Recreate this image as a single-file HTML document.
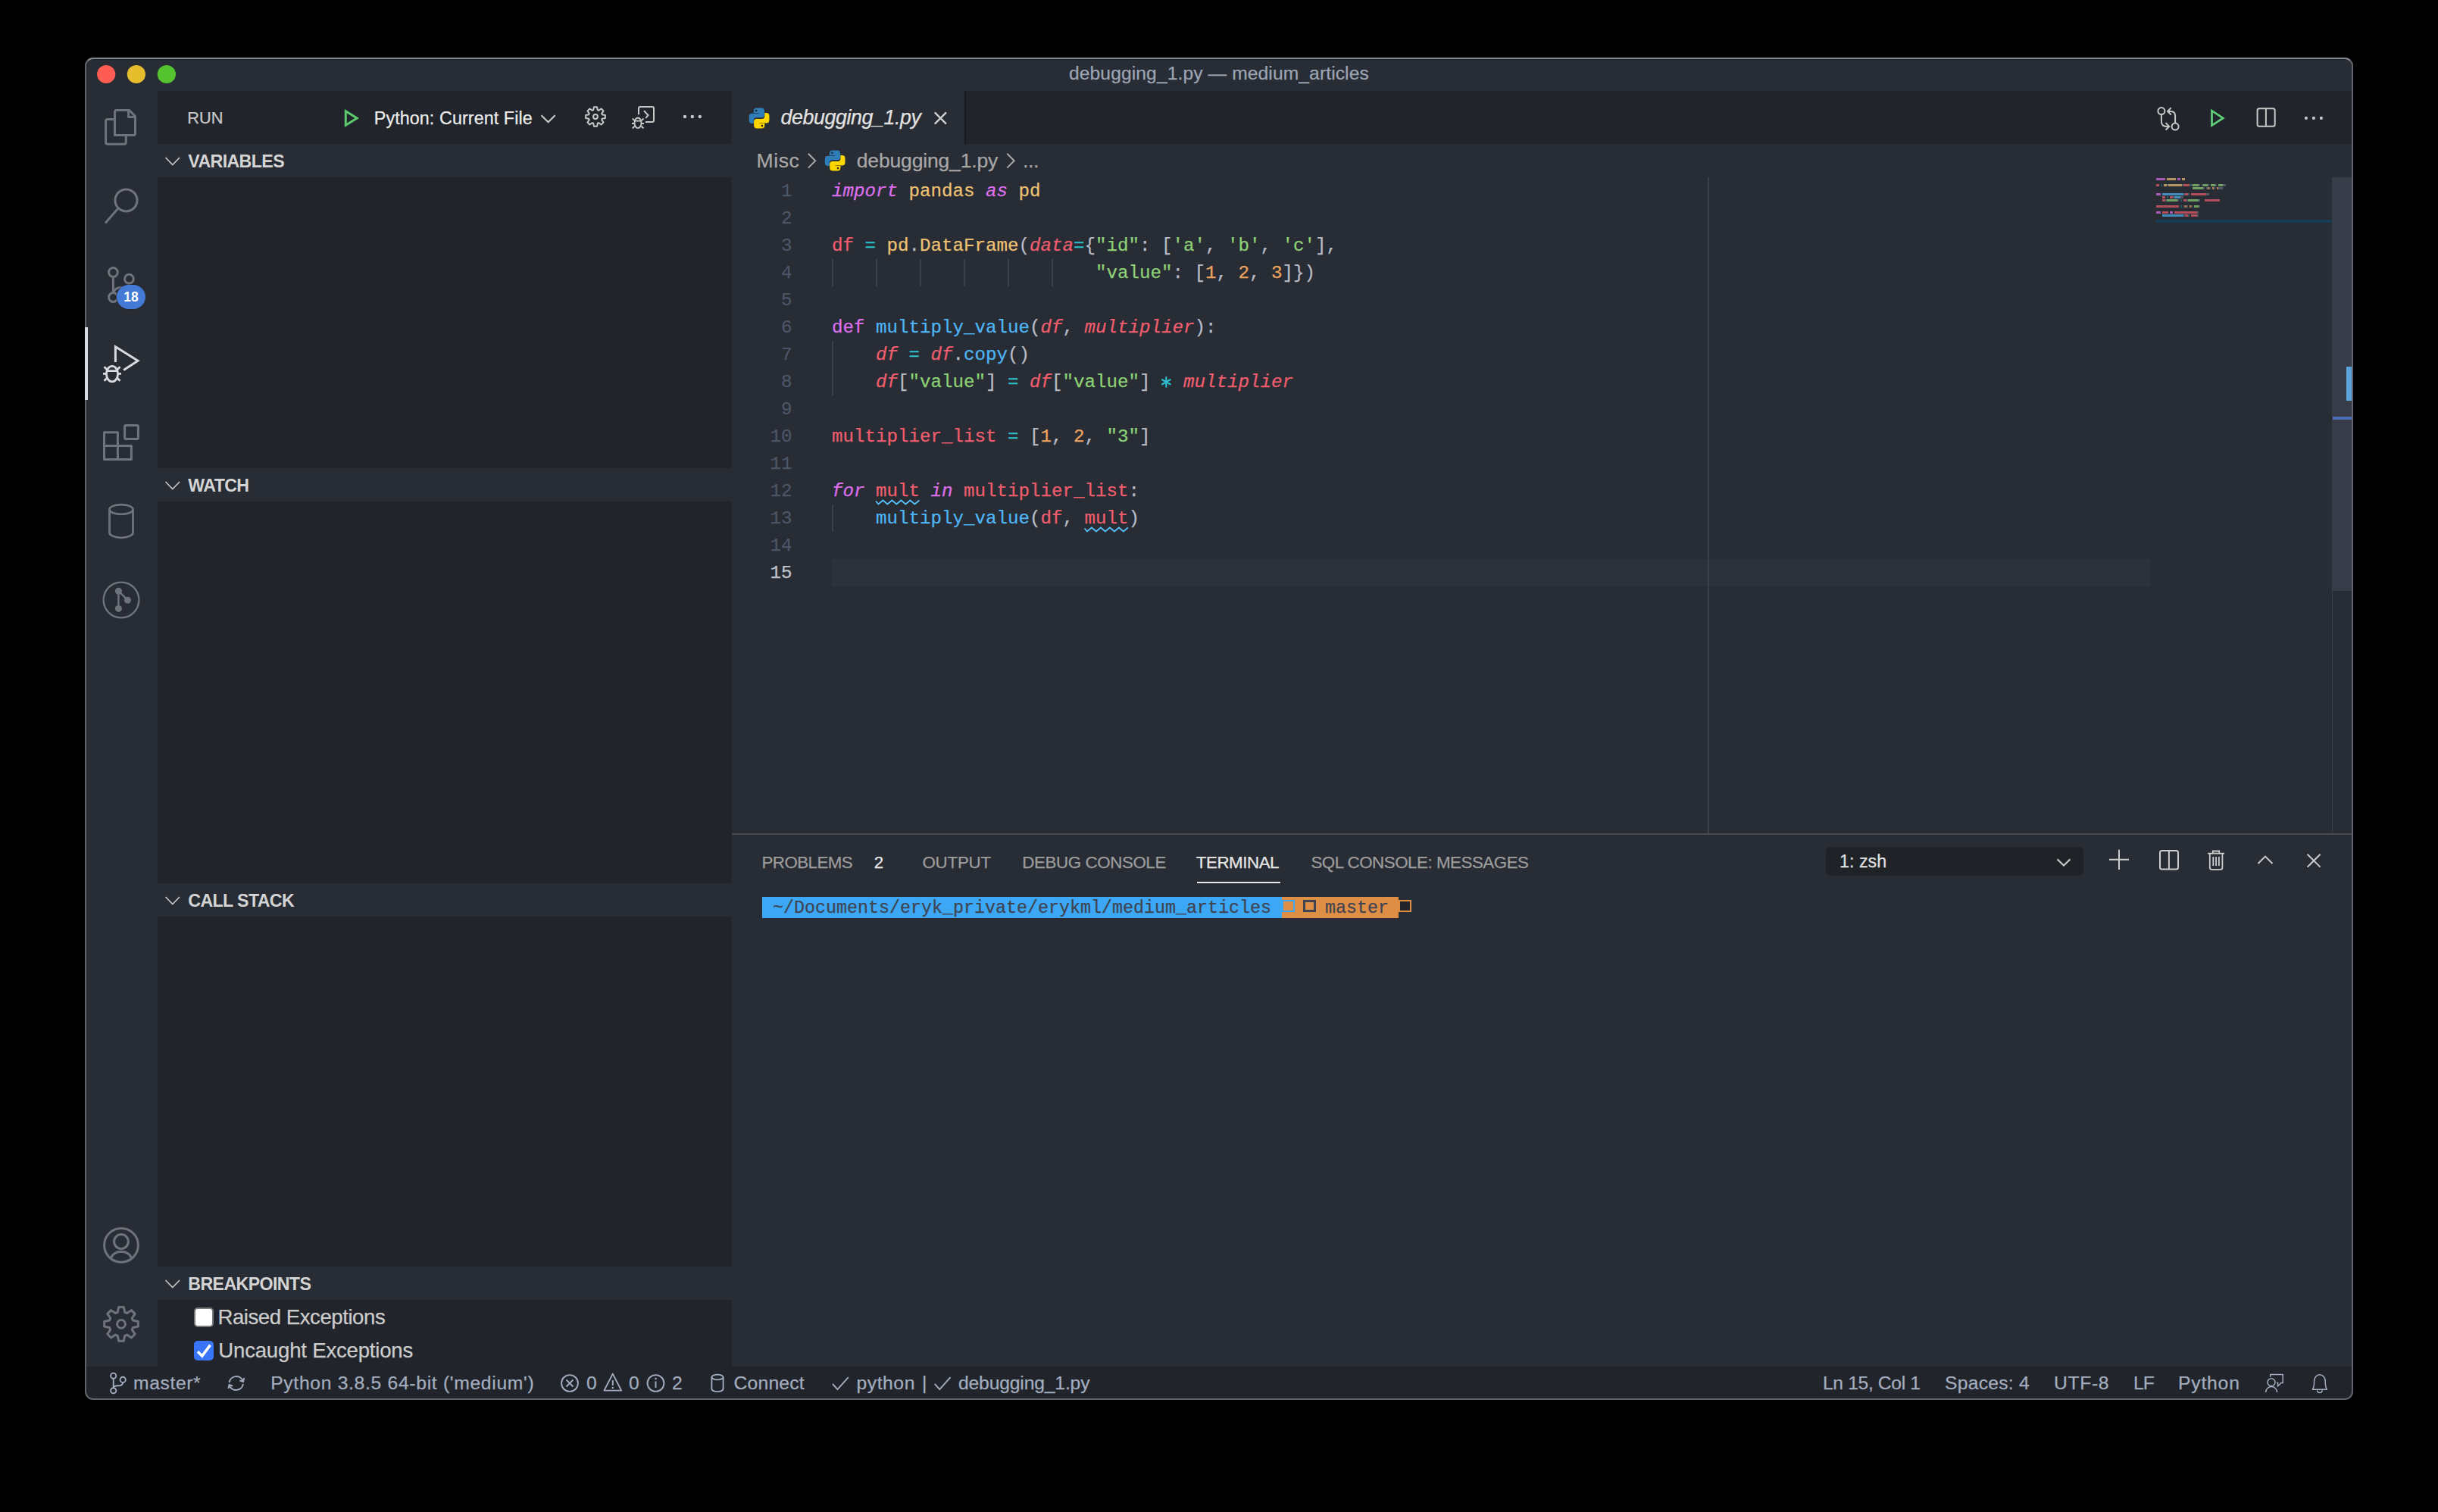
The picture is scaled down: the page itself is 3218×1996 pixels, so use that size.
<!DOCTYPE html>
<html><head><meta charset="utf-8">
<style>
*{margin:0;padding:0;box-sizing:border-box}
html,body{width:3218px;height:1996px;background:#000;overflow:hidden;font-family:"Liberation Sans",sans-serif}
.r{position:absolute}
.t{position:absolute;white-space:pre;line-height:1}
#win{position:absolute;left:112px;top:76px;width:2994px;height:1772px;border-radius:11px;overflow:hidden;background:#282c34}
#pg{position:absolute;left:-112px;top:-76px;width:3218px;height:1996px}
#ov{position:absolute;left:0;top:0;width:3218px;height:1996px;overflow:visible}
#bd{position:absolute;left:112px;top:76px;width:2994px;height:1772px;border-radius:11px;border:2px solid #606369;border-top-color:#86898e}
.t{-webkit-text-stroke:0.25px currentColor}
</style></head><body>
<div id="win"><div id="pg">
<div class="r" style="left:208px;top:120px;width:758px;height:1684px;background:#21252b;"></div>
<div class="r" style="left:208px;top:190px;width:758px;height:44px;background:#282c34;"></div>
<div class="r" style="left:208px;top:618px;width:758px;height:44px;background:#282c34;"></div>
<div class="r" style="left:208px;top:1166px;width:758px;height:44px;background:#282c34;"></div>
<div class="r" style="left:208px;top:1672px;width:758px;height:44px;background:#282c34;"></div>
<div class="r" style="left:966px;top:120px;width:2140px;height:70px;background:#21252b;"></div>
<div class="r" style="left:966px;top:120px;width:308px;height:70px;background:#282c34;"></div>
<div class="r" style="left:1273px;top:120px;width:2px;height:70px;background:#181a1f;"></div>
<div class="r" style="left:112px;top:1804px;width:2994px;height:44px;background:#21252b;"></div>
<div class="r" style="left:112px;top:78px;width:2994px;height:1px;background:#1e2128;"></div>
<div class="t" style="left:1411.00px;top:84.97px;font-size:24.6px;color:#9da5b4;letter-spacing:0.11px;">debugging_1.py — medium_articles</div>
<div class="t" style="left:247.30px;top:145.24px;font-size:21.8px;color:#c8c8c8;">RUN</div>
<div class="t" style="left:493.80px;top:145.27px;font-size:23.3px;color:#ececec;letter-spacing:0.09px;">Python: Current File</div>
<div class="t" style="left:248.30px;top:201.76px;font-size:23.2px;color:#d4d4d4;font-weight:bold;-webkit-text-stroke:0;letter-spacing:-0.62px;">VARIABLES</div>
<div class="t" style="left:248.30px;top:629.76px;font-size:23.2px;color:#d4d4d4;font-weight:bold;-webkit-text-stroke:0;letter-spacing:-0.62px;">WATCH</div>
<div class="t" style="left:248.30px;top:1177.76px;font-size:23.2px;color:#d4d4d4;font-weight:bold;-webkit-text-stroke:0;letter-spacing:-0.62px;">CALL STACK</div>
<div class="t" style="left:248.30px;top:1683.76px;font-size:23.2px;color:#d4d4d4;font-weight:bold;-webkit-text-stroke:0;letter-spacing:-0.62px;">BREAKPOINTS</div>
<div class="r" style="left:256px;top:1726px;width:26px;height:26px;border-radius:5px;background:#fff;border:2px solid #7a7a7a"></div>
<div class="r" style="left:256px;top:1770px;width:26px;height:26px;border-radius:5px;background:#3a74f6"></div>
<div class="t" style="left:287.50px;top:1724.63px;font-size:27.6px;color:#cccccc;letter-spacing:-0.46px;">Raised Exceptions</div>
<div class="t" style="left:288.30px;top:1768.63px;font-size:27.6px;color:#cccccc;letter-spacing:-0.21px;">Uncaught Exceptions</div>
<div class="t" style="left:1030.60px;top:141.61px;font-size:26.8px;color:#e2e2e2;font-style:italic;letter-spacing:-0.41px;">debugging_1.py</div>
<div class="t" style="left:998.50px;top:199.46px;font-size:26.5px;color:#a8a8a8;letter-spacing:0.6px;">Misc</div>
<div class="t" style="left:1130.80px;top:199.46px;font-size:26.5px;color:#a8a8a8;letter-spacing:-0.17px;">debugging_1.py</div>
<div class="t" style="left:1350.20px;top:200.31px;font-size:25.5px;color:#a8a8a8;">...</div>
<div class="r" style="left:1098px;top:738px;width:1740px;height:36px;background:#2c313c;"></div>
<div class="r" style="left:2254px;top:234px;width:2px;height:866px;background:#3b404a;"></div>
<div class="t" style="left:1031.10px;top:241.49px;font-size:24.16px;color:#4d5667;font-family:'Liberation Mono',monospace;">1</div>
<div class="t" style="left:1098.00px;top:241.49px;font-size:24.16px;color:#b8bcc7;font-family:'Liberation Mono',monospace;"><span style="color:#dd6fed;font-style:italic">import</span> <span style="color:#eec274">pandas</span> <span style="color:#dd6fed;font-style:italic">as</span> <span style="color:#eec274">pd</span></div>
<div class="t" style="left:1031.10px;top:277.49px;font-size:24.16px;color:#4d5667;font-family:'Liberation Mono',monospace;">2</div>
<div class="t" style="left:1031.10px;top:313.49px;font-size:24.16px;color:#4d5667;font-family:'Liberation Mono',monospace;">3</div>
<div class="t" style="left:1098.00px;top:313.49px;font-size:24.16px;color:#b8bcc7;font-family:'Liberation Mono',monospace;"><span style="color:#ef5e6e">df</span> <span style="color:#2cbccb">=</span> <span style="color:#eec274">pd</span><span style="color:#b8bcc7">.</span><span style="color:#eec274">DataFrame</span><span style="color:#b8bcc7">(</span><span style="color:#ef5e6e;font-style:italic">data</span><span style="color:#2cbccb">=</span><span style="color:#b8bcc7">{</span><span style="color:#8dd276">"id"</span><span style="color:#b8bcc7">: [</span><span style="color:#8dd276">'a'</span><span style="color:#b8bcc7">, </span><span style="color:#8dd276">'b'</span><span style="color:#b8bcc7">, </span><span style="color:#8dd276">'c'</span><span style="color:#b8bcc7">],</span></div>
<div class="t" style="left:1031.10px;top:349.49px;font-size:24.16px;color:#4d5667;font-family:'Liberation Mono',monospace;">4</div>
<div class="t" style="left:1098.00px;top:349.49px;font-size:24.16px;color:#b8bcc7;font-family:'Liberation Mono',monospace;">                        <span style="color:#8dd276">"value"</span><span style="color:#b8bcc7">: [</span><span style="color:#eda35d">1</span><span style="color:#b8bcc7">, </span><span style="color:#eda35d">2</span><span style="color:#b8bcc7">, </span><span style="color:#eda35d">3</span><span style="color:#b8bcc7">]})</span></div>
<div class="t" style="left:1031.10px;top:385.49px;font-size:24.16px;color:#4d5667;font-family:'Liberation Mono',monospace;">5</div>
<div class="t" style="left:1031.10px;top:421.49px;font-size:24.16px;color:#4d5667;font-family:'Liberation Mono',monospace;">6</div>
<div class="t" style="left:1098.00px;top:421.49px;font-size:24.16px;color:#b8bcc7;font-family:'Liberation Mono',monospace;"><span style="color:#dd6fed">def</span> <span style="color:#4fb6f6">multiply_value</span><span style="color:#b8bcc7">(</span><span style="color:#ef5e6e;font-style:italic">df</span><span style="color:#b8bcc7">, </span><span style="color:#ef5e6e;font-style:italic">multiplier</span><span style="color:#b8bcc7">):</span></div>
<div class="t" style="left:1031.10px;top:457.49px;font-size:24.16px;color:#4d5667;font-family:'Liberation Mono',monospace;">7</div>
<div class="t" style="left:1098.00px;top:457.49px;font-size:24.16px;color:#b8bcc7;font-family:'Liberation Mono',monospace;">    <span style="color:#ef5e6e;font-style:italic">df</span> <span style="color:#2cbccb">=</span> <span style="color:#ef5e6e;font-style:italic">df</span><span style="color:#b8bcc7">.</span><span style="color:#4fb6f6">copy</span><span style="color:#b8bcc7">()</span></div>
<div class="t" style="left:1031.10px;top:493.49px;font-size:24.16px;color:#4d5667;font-family:'Liberation Mono',monospace;">8</div>
<div class="t" style="left:1098.00px;top:493.49px;font-size:24.16px;color:#b8bcc7;font-family:'Liberation Mono',monospace;">    <span style="color:#ef5e6e;font-style:italic">df</span><span style="color:#b8bcc7">[</span><span style="color:#8dd276">"value"</span><span style="color:#b8bcc7">]</span> <span style="color:#2cbccb">=</span> <span style="color:#ef5e6e;font-style:italic">df</span><span style="color:#b8bcc7">[</span><span style="color:#8dd276">"value"</span><span style="color:#b8bcc7">]</span>   <span style="color:#ef5e6e;font-style:italic">multiplier</span></div>
<div class="t" style="left:1031.10px;top:529.49px;font-size:24.16px;color:#4d5667;font-family:'Liberation Mono',monospace;">9</div>
<div class="t" style="left:1016.60px;top:565.49px;font-size:24.16px;color:#4d5667;font-family:'Liberation Mono',monospace;">10</div>
<div class="t" style="left:1098.00px;top:565.49px;font-size:24.16px;color:#b8bcc7;font-family:'Liberation Mono',monospace;"><span style="color:#ef5e6e">multiplier_list</span> <span style="color:#2cbccb">=</span> <span style="color:#b8bcc7">[</span><span style="color:#eda35d">1</span><span style="color:#b8bcc7">, </span><span style="color:#eda35d">2</span><span style="color:#b8bcc7">, </span><span style="color:#8dd276">"3"</span><span style="color:#b8bcc7">]</span></div>
<div class="t" style="left:1016.60px;top:601.49px;font-size:24.16px;color:#4d5667;font-family:'Liberation Mono',monospace;">11</div>
<div class="t" style="left:1016.60px;top:637.49px;font-size:24.16px;color:#4d5667;font-family:'Liberation Mono',monospace;">12</div>
<div class="t" style="left:1098.00px;top:637.49px;font-size:24.16px;color:#b8bcc7;font-family:'Liberation Mono',monospace;"><span style="color:#dd6fed;font-style:italic">for</span> <span style="color:#ef5e6e">mult</span> <span style="color:#dd6fed;font-style:italic">in</span> <span style="color:#ef5e6e">multiplier_list</span><span style="color:#b8bcc7">:</span></div>
<div class="t" style="left:1016.60px;top:673.49px;font-size:24.16px;color:#4d5667;font-family:'Liberation Mono',monospace;">13</div>
<div class="t" style="left:1098.00px;top:673.49px;font-size:24.16px;color:#b8bcc7;font-family:'Liberation Mono',monospace;">    <span style="color:#4fb6f6">multiply_value</span><span style="color:#b8bcc7">(</span><span style="color:#ef5e6e">df</span><span style="color:#b8bcc7">, </span><span style="color:#ef5e6e">mult</span><span style="color:#b8bcc7">)</span></div>
<div class="t" style="left:1016.60px;top:709.49px;font-size:24.16px;color:#4d5667;font-family:'Liberation Mono',monospace;">14</div>
<div class="t" style="left:1016.60px;top:745.49px;font-size:24.16px;color:#c0c4cc;font-family:'Liberation Mono',monospace;">15</div>
<div class="r" style="left:1098.0px;top:342px;width:2px;height:36px;background:#3b4048;"></div>
<div class="r" style="left:1156.0px;top:342px;width:2px;height:36px;background:#3b4048;"></div>
<div class="r" style="left:1214.0px;top:342px;width:2px;height:36px;background:#3b4048;"></div>
<div class="r" style="left:1272.0px;top:342px;width:2px;height:36px;background:#3b4048;"></div>
<div class="r" style="left:1330.0px;top:342px;width:2px;height:36px;background:#3b4048;"></div>
<div class="r" style="left:1388.0px;top:342px;width:2px;height:36px;background:#3b4048;"></div>
<div class="r" style="left:1098px;top:450px;width:2px;height:72px;background:#3b4048;"></div>
<div class="r" style="left:1098px;top:666px;width:2px;height:36px;background:#3b4048;"></div>
<div class="r" style="left:2846px;top:234.5px;width:12px;height:3px;background:repeating-linear-gradient(90deg,#dd6fed 0 1.6px,transparent 1.6px 2px);opacity:0.7"></div>
<div class="r" style="left:2860px;top:234.5px;width:12px;height:3px;background:repeating-linear-gradient(90deg,#eec274 0 1.6px,transparent 1.6px 2px);opacity:0.7"></div>
<div class="r" style="left:2874px;top:234.5px;width:4px;height:3px;background:repeating-linear-gradient(90deg,#dd6fed 0 1.6px,transparent 1.6px 2px);opacity:0.7"></div>
<div class="r" style="left:2880px;top:234.5px;width:4px;height:3px;background:repeating-linear-gradient(90deg,#eec274 0 1.6px,transparent 1.6px 2px);opacity:0.7"></div>
<div class="r" style="left:2846px;top:242.5px;width:4px;height:3px;background:repeating-linear-gradient(90deg,#ef5e6e 0 1.6px,transparent 1.6px 2px);opacity:0.7"></div>
<div class="r" style="left:2852px;top:242.5px;width:2px;height:3px;background:repeating-linear-gradient(90deg,#2cbccb 0 1.6px,transparent 1.6px 2px);opacity:0.3"></div>
<div class="r" style="left:2856px;top:242.5px;width:4px;height:3px;background:repeating-linear-gradient(90deg,#eec274 0 1.6px,transparent 1.6px 2px);opacity:0.7"></div>
<div class="r" style="left:2860px;top:242.5px;width:2px;height:3px;background:repeating-linear-gradient(90deg,#b8bcc7 0 1.6px,transparent 1.6px 2px);opacity:0.3"></div>
<div class="r" style="left:2862px;top:242.5px;width:18px;height:3px;background:repeating-linear-gradient(90deg,#eec274 0 1.6px,transparent 1.6px 2px);opacity:0.7"></div>
<div class="r" style="left:2880px;top:242.5px;width:2px;height:3px;background:repeating-linear-gradient(90deg,#b8bcc7 0 1.6px,transparent 1.6px 2px);opacity:0.3"></div>
<div class="r" style="left:2882px;top:242.5px;width:8px;height:3px;background:repeating-linear-gradient(90deg,#ef5e6e 0 1.6px,transparent 1.6px 2px);opacity:0.7"></div>
<div class="r" style="left:2890px;top:242.5px;width:2px;height:3px;background:repeating-linear-gradient(90deg,#2cbccb 0 1.6px,transparent 1.6px 2px);opacity:0.3"></div>
<div class="r" style="left:2892px;top:242.5px;width:2px;height:3px;background:repeating-linear-gradient(90deg,#b8bcc7 0 1.6px,transparent 1.6px 2px);opacity:0.3"></div>
<div class="r" style="left:2894px;top:242.5px;width:8px;height:3px;background:repeating-linear-gradient(90deg,#8dd276 0 1.6px,transparent 1.6px 2px);opacity:0.7"></div>
<div class="r" style="left:2902px;top:242.5px;width:2px;height:3px;background:repeating-linear-gradient(90deg,#b8bcc7 0 1.6px,transparent 1.6px 2px);opacity:0.3"></div>
<div class="r" style="left:2906px;top:242.5px;width:2px;height:3px;background:repeating-linear-gradient(90deg,#b8bcc7 0 1.6px,transparent 1.6px 2px);opacity:0.3"></div>
<div class="r" style="left:2908px;top:242.5px;width:6px;height:3px;background:repeating-linear-gradient(90deg,#8dd276 0 1.6px,transparent 1.6px 2px);opacity:0.7"></div>
<div class="r" style="left:2914px;top:242.5px;width:2px;height:3px;background:repeating-linear-gradient(90deg,#b8bcc7 0 1.6px,transparent 1.6px 2px);opacity:0.3"></div>
<div class="r" style="left:2918px;top:242.5px;width:6px;height:3px;background:repeating-linear-gradient(90deg,#8dd276 0 1.6px,transparent 1.6px 2px);opacity:0.7"></div>
<div class="r" style="left:2924px;top:242.5px;width:2px;height:3px;background:repeating-linear-gradient(90deg,#b8bcc7 0 1.6px,transparent 1.6px 2px);opacity:0.3"></div>
<div class="r" style="left:2928px;top:242.5px;width:6px;height:3px;background:repeating-linear-gradient(90deg,#8dd276 0 1.6px,transparent 1.6px 2px);opacity:0.7"></div>
<div class="r" style="left:2934px;top:242.5px;width:2px;height:3px;background:repeating-linear-gradient(90deg,#b8bcc7 0 1.6px,transparent 1.6px 2px);opacity:0.3"></div>
<div class="r" style="left:2936px;top:242.5px;width:2px;height:3px;background:repeating-linear-gradient(90deg,#b8bcc7 0 1.6px,transparent 1.6px 2px);opacity:0.3"></div>
<div class="r" style="left:2894px;top:246.5px;width:14px;height:3px;background:repeating-linear-gradient(90deg,#8dd276 0 1.6px,transparent 1.6px 2px);opacity:0.7"></div>
<div class="r" style="left:2908px;top:246.5px;width:2px;height:3px;background:repeating-linear-gradient(90deg,#b8bcc7 0 1.6px,transparent 1.6px 2px);opacity:0.3"></div>
<div class="r" style="left:2912px;top:246.5px;width:2px;height:3px;background:repeating-linear-gradient(90deg,#b8bcc7 0 1.6px,transparent 1.6px 2px);opacity:0.3"></div>
<div class="r" style="left:2914px;top:246.5px;width:2px;height:3px;background:repeating-linear-gradient(90deg,#eda35d 0 1.6px,transparent 1.6px 2px);opacity:0.7"></div>
<div class="r" style="left:2916px;top:246.5px;width:2px;height:3px;background:repeating-linear-gradient(90deg,#b8bcc7 0 1.6px,transparent 1.6px 2px);opacity:0.3"></div>
<div class="r" style="left:2920px;top:246.5px;width:2px;height:3px;background:repeating-linear-gradient(90deg,#eda35d 0 1.6px,transparent 1.6px 2px);opacity:0.7"></div>
<div class="r" style="left:2922px;top:246.5px;width:2px;height:3px;background:repeating-linear-gradient(90deg,#b8bcc7 0 1.6px,transparent 1.6px 2px);opacity:0.3"></div>
<div class="r" style="left:2926px;top:246.5px;width:2px;height:3px;background:repeating-linear-gradient(90deg,#eda35d 0 1.6px,transparent 1.6px 2px);opacity:0.7"></div>
<div class="r" style="left:2928px;top:246.5px;width:2px;height:3px;background:repeating-linear-gradient(90deg,#b8bcc7 0 1.6px,transparent 1.6px 2px);opacity:0.3"></div>
<div class="r" style="left:2930px;top:246.5px;width:2px;height:3px;background:repeating-linear-gradient(90deg,#b8bcc7 0 1.6px,transparent 1.6px 2px);opacity:0.3"></div>
<div class="r" style="left:2932px;top:246.5px;width:2px;height:3px;background:repeating-linear-gradient(90deg,#b8bcc7 0 1.6px,transparent 1.6px 2px);opacity:0.3"></div>
<div class="r" style="left:2846px;top:254.5px;width:6px;height:3px;background:repeating-linear-gradient(90deg,#dd6fed 0 1.6px,transparent 1.6px 2px);opacity:0.7"></div>
<div class="r" style="left:2854px;top:254.5px;width:28px;height:3px;background:repeating-linear-gradient(90deg,#4fb6f6 0 1.6px,transparent 1.6px 2px);opacity:0.7"></div>
<div class="r" style="left:2882px;top:254.5px;width:2px;height:3px;background:repeating-linear-gradient(90deg,#b8bcc7 0 1.6px,transparent 1.6px 2px);opacity:0.3"></div>
<div class="r" style="left:2884px;top:254.5px;width:4px;height:3px;background:repeating-linear-gradient(90deg,#ef5e6e 0 1.6px,transparent 1.6px 2px);opacity:0.7"></div>
<div class="r" style="left:2888px;top:254.5px;width:2px;height:3px;background:repeating-linear-gradient(90deg,#b8bcc7 0 1.6px,transparent 1.6px 2px);opacity:0.3"></div>
<div class="r" style="left:2892px;top:254.5px;width:20px;height:3px;background:repeating-linear-gradient(90deg,#ef5e6e 0 1.6px,transparent 1.6px 2px);opacity:0.7"></div>
<div class="r" style="left:2912px;top:254.5px;width:2px;height:3px;background:repeating-linear-gradient(90deg,#b8bcc7 0 1.6px,transparent 1.6px 2px);opacity:0.3"></div>
<div class="r" style="left:2914px;top:254.5px;width:2px;height:3px;background:repeating-linear-gradient(90deg,#b8bcc7 0 1.6px,transparent 1.6px 2px);opacity:0.3"></div>
<div class="r" style="left:2854px;top:258.5px;width:4px;height:3px;background:repeating-linear-gradient(90deg,#ef5e6e 0 1.6px,transparent 1.6px 2px);opacity:0.7"></div>
<div class="r" style="left:2860px;top:258.5px;width:2px;height:3px;background:repeating-linear-gradient(90deg,#2cbccb 0 1.6px,transparent 1.6px 2px);opacity:0.3"></div>
<div class="r" style="left:2864px;top:258.5px;width:4px;height:3px;background:repeating-linear-gradient(90deg,#ef5e6e 0 1.6px,transparent 1.6px 2px);opacity:0.7"></div>
<div class="r" style="left:2868px;top:258.5px;width:2px;height:3px;background:repeating-linear-gradient(90deg,#b8bcc7 0 1.6px,transparent 1.6px 2px);opacity:0.3"></div>
<div class="r" style="left:2870px;top:258.5px;width:8px;height:3px;background:repeating-linear-gradient(90deg,#4fb6f6 0 1.6px,transparent 1.6px 2px);opacity:0.7"></div>
<div class="r" style="left:2878px;top:258.5px;width:2px;height:3px;background:repeating-linear-gradient(90deg,#b8bcc7 0 1.6px,transparent 1.6px 2px);opacity:0.3"></div>
<div class="r" style="left:2880px;top:258.5px;width:2px;height:3px;background:repeating-linear-gradient(90deg,#b8bcc7 0 1.6px,transparent 1.6px 2px);opacity:0.3"></div>
<div class="r" style="left:2854px;top:262.5px;width:4px;height:3px;background:repeating-linear-gradient(90deg,#ef5e6e 0 1.6px,transparent 1.6px 2px);opacity:0.7"></div>
<div class="r" style="left:2858px;top:262.5px;width:2px;height:3px;background:repeating-linear-gradient(90deg,#b8bcc7 0 1.6px,transparent 1.6px 2px);opacity:0.3"></div>
<div class="r" style="left:2860px;top:262.5px;width:14px;height:3px;background:repeating-linear-gradient(90deg,#8dd276 0 1.6px,transparent 1.6px 2px);opacity:0.7"></div>
<div class="r" style="left:2874px;top:262.5px;width:2px;height:3px;background:repeating-linear-gradient(90deg,#b8bcc7 0 1.6px,transparent 1.6px 2px);opacity:0.3"></div>
<div class="r" style="left:2878px;top:262.5px;width:2px;height:3px;background:repeating-linear-gradient(90deg,#2cbccb 0 1.6px,transparent 1.6px 2px);opacity:0.3"></div>
<div class="r" style="left:2882px;top:262.5px;width:4px;height:3px;background:repeating-linear-gradient(90deg,#ef5e6e 0 1.6px,transparent 1.6px 2px);opacity:0.7"></div>
<div class="r" style="left:2886px;top:262.5px;width:2px;height:3px;background:repeating-linear-gradient(90deg,#b8bcc7 0 1.6px,transparent 1.6px 2px);opacity:0.3"></div>
<div class="r" style="left:2888px;top:262.5px;width:14px;height:3px;background:repeating-linear-gradient(90deg,#8dd276 0 1.6px,transparent 1.6px 2px);opacity:0.7"></div>
<div class="r" style="left:2902px;top:262.5px;width:2px;height:3px;background:repeating-linear-gradient(90deg,#b8bcc7 0 1.6px,transparent 1.6px 2px);opacity:0.3"></div>
<div class="r" style="left:2910px;top:262.5px;width:20px;height:3px;background:repeating-linear-gradient(90deg,#ef5e6e 0 1.6px,transparent 1.6px 2px);opacity:0.7"></div>
<div class="r" style="left:2846px;top:270.5px;width:30px;height:3px;background:repeating-linear-gradient(90deg,#ef5e6e 0 1.6px,transparent 1.6px 2px);opacity:0.7"></div>
<div class="r" style="left:2878px;top:270.5px;width:2px;height:3px;background:repeating-linear-gradient(90deg,#2cbccb 0 1.6px,transparent 1.6px 2px);opacity:0.3"></div>
<div class="r" style="left:2882px;top:270.5px;width:2px;height:3px;background:repeating-linear-gradient(90deg,#b8bcc7 0 1.6px,transparent 1.6px 2px);opacity:0.3"></div>
<div class="r" style="left:2884px;top:270.5px;width:2px;height:3px;background:repeating-linear-gradient(90deg,#eda35d 0 1.6px,transparent 1.6px 2px);opacity:0.7"></div>
<div class="r" style="left:2886px;top:270.5px;width:2px;height:3px;background:repeating-linear-gradient(90deg,#b8bcc7 0 1.6px,transparent 1.6px 2px);opacity:0.3"></div>
<div class="r" style="left:2890px;top:270.5px;width:2px;height:3px;background:repeating-linear-gradient(90deg,#eda35d 0 1.6px,transparent 1.6px 2px);opacity:0.7"></div>
<div class="r" style="left:2892px;top:270.5px;width:2px;height:3px;background:repeating-linear-gradient(90deg,#b8bcc7 0 1.6px,transparent 1.6px 2px);opacity:0.3"></div>
<div class="r" style="left:2896px;top:270.5px;width:6px;height:3px;background:repeating-linear-gradient(90deg,#8dd276 0 1.6px,transparent 1.6px 2px);opacity:0.7"></div>
<div class="r" style="left:2902px;top:270.5px;width:2px;height:3px;background:repeating-linear-gradient(90deg,#b8bcc7 0 1.6px,transparent 1.6px 2px);opacity:0.3"></div>
<div class="r" style="left:2846px;top:278.5px;width:6px;height:3px;background:repeating-linear-gradient(90deg,#dd6fed 0 1.6px,transparent 1.6px 2px);opacity:0.7"></div>
<div class="r" style="left:2854px;top:278.5px;width:8px;height:3px;background:repeating-linear-gradient(90deg,#ef5e6e 0 1.6px,transparent 1.6px 2px);opacity:0.7"></div>
<div class="r" style="left:2864px;top:278.5px;width:4px;height:3px;background:repeating-linear-gradient(90deg,#dd6fed 0 1.6px,transparent 1.6px 2px);opacity:0.7"></div>
<div class="r" style="left:2870px;top:278.5px;width:30px;height:3px;background:repeating-linear-gradient(90deg,#ef5e6e 0 1.6px,transparent 1.6px 2px);opacity:0.7"></div>
<div class="r" style="left:2900px;top:278.5px;width:2px;height:3px;background:repeating-linear-gradient(90deg,#b8bcc7 0 1.6px,transparent 1.6px 2px);opacity:0.3"></div>
<div class="r" style="left:2854px;top:282.5px;width:28px;height:3px;background:repeating-linear-gradient(90deg,#4fb6f6 0 1.6px,transparent 1.6px 2px);opacity:0.7"></div>
<div class="r" style="left:2882px;top:282.5px;width:2px;height:3px;background:repeating-linear-gradient(90deg,#b8bcc7 0 1.6px,transparent 1.6px 2px);opacity:0.3"></div>
<div class="r" style="left:2884px;top:282.5px;width:4px;height:3px;background:repeating-linear-gradient(90deg,#ef5e6e 0 1.6px,transparent 1.6px 2px);opacity:0.7"></div>
<div class="r" style="left:2888px;top:282.5px;width:2px;height:3px;background:repeating-linear-gradient(90deg,#b8bcc7 0 1.6px,transparent 1.6px 2px);opacity:0.3"></div>
<div class="r" style="left:2892px;top:282.5px;width:8px;height:3px;background:repeating-linear-gradient(90deg,#ef5e6e 0 1.6px,transparent 1.6px 2px);opacity:0.7"></div>
<div class="r" style="left:2900px;top:282.5px;width:2px;height:3px;background:repeating-linear-gradient(90deg,#b8bcc7 0 1.6px,transparent 1.6px 2px);opacity:0.3"></div>
<div class="r" style="left:2846px;top:290px;width:232px;height:4px;background:#1a3b56;"></div>
<div class="r" style="left:3078px;top:234px;width:27px;height:546px;background:#373c48;"></div>
<div class="r" style="left:3078px;top:234px;width:1px;height:866px;background:#3a3f4a;"></div>
<div class="r" style="left:3097px;top:484px;width:8px;height:45px;background:#5aa3dc;"></div>
<div class="r" style="left:3079px;top:550px;width:26px;height:4px;background:#4c6eb3;"></div>
<div class="r" style="left:966px;top:1100px;width:2140px;height:2px;background:#484b51;"></div>
<div class="t" style="left:1005.50px;top:1127.62px;font-size:22.3px;color:#9d9d9d;letter-spacing:-0.54px;">PROBLEMS</div>
<div class="t" style="left:1217.40px;top:1127.62px;font-size:22.3px;color:#9d9d9d;letter-spacing:-0.18px;">OUTPUT</div>
<div class="t" style="left:1349.20px;top:1127.62px;font-size:22.3px;color:#9d9d9d;letter-spacing:-0.37px;">DEBUG CONSOLE</div>
<div class="t" style="left:1578.80px;top:1127.62px;font-size:22.3px;color:#e7e7e7;letter-spacing:-0.43px;">TERMINAL</div>
<div class="t" style="left:1730.40px;top:1127.62px;font-size:22.3px;color:#9d9d9d;letter-spacing:-0.45px;">SQL CONSOLE: MESSAGES</div>
<div class="t" style="left:1153.80px;top:1127.62px;font-size:22.3px;color:#e7e7e7;">2</div>
<div class="r" style="left:1580px;top:1164px;width:110px;height:2px;background:#e7e7e7;"></div>
<div class="r" style="left:2410px;top:1118px;width:340px;height:38px;border-radius:7px;background:#1f2227"></div>
<div class="t" style="left:2428.00px;top:1126.27px;font-size:23.3px;color:#e0e0e0;">1: zsh</div>
<div class="r" style="left:1006px;top:1184px;width:686px;height:28px;background:#3ba7f5;"></div>
<div class="r" style="left:1692px;top:1184px;width:154px;height:28px;background:#df8e45;"></div>
<div class="t" style="left:1006.00px;top:1188.13px;font-size:23.33px;color:#3f4451;font-family:'Liberation Mono',monospace;"> ~/Documents/eryk_private/erykml/medium_articles </div>
<div class="t" style="left:1748.90px;top:1188.13px;font-size:23.33px;color:#3f4451;font-family:'Liberation Mono',monospace;">master</div>
<div class="r" style="left:1692px;top:1188px;width:17px;height:16px;border:2.5px solid #3ba7f5"></div>
<div class="r" style="left:1720px;top:1188px;width:17px;height:16px;border:3px solid #3f4451"></div>
<div class="r" style="left:1846px;top:1188px;width:17px;height:16px;border:2.5px solid #df8e45;background:#21252b"></div>
<div class="t" style="left:176.00px;top:1813.79px;font-size:24.7px;color:#a3adbf;letter-spacing:0.6px;">master*</div>
<div class="t" style="left:357.20px;top:1813.79px;font-size:24.7px;color:#a3adbf;letter-spacing:0.68px;">Python 3.8.5 64-bit ('medium')</div>
<div class="t" style="left:774.00px;top:1813.79px;font-size:24.7px;color:#a3adbf;">0</div>
<div class="t" style="left:830.00px;top:1813.79px;font-size:24.7px;color:#a3adbf;">0</div>
<div class="t" style="left:887.00px;top:1813.79px;font-size:24.7px;color:#a3adbf;">2</div>
<div class="t" style="left:968.50px;top:1813.79px;font-size:24.7px;color:#a3adbf;letter-spacing:0.2px;">Connect</div>
<div class="t" style="left:1130.50px;top:1813.79px;font-size:24.7px;color:#a3adbf;letter-spacing:0.55px;">python</div>
<div class="t" style="left:1217.00px;top:1813.79px;font-size:24.7px;color:#a3adbf;">|</div>
<div class="t" style="left:1265.00px;top:1813.79px;font-size:24.7px;color:#a3adbf;letter-spacing:-0.17px;">debugging_1.py</div>
<div class="t" style="left:2406.00px;top:1813.79px;font-size:24.7px;color:#a3adbf;letter-spacing:-0.38px;">Ln 15, Col 1</div>
<div class="t" style="left:2567.00px;top:1813.79px;font-size:24.7px;color:#a3adbf;letter-spacing:0.25px;">Spaces: 4</div>
<div class="t" style="left:2711.00px;top:1813.79px;font-size:24.7px;color:#a3adbf;letter-spacing:0.65px;">UTF-8</div>
<div class="t" style="left:2816.00px;top:1813.79px;font-size:24.7px;color:#a3adbf;letter-spacing:-1px;">LF</div>
<div class="t" style="left:2875.00px;top:1813.79px;font-size:24.7px;color:#a3adbf;letter-spacing:0.8px;">Python</div>
</div></div>
<div id="bd"></div>
<svg id="ov" viewBox="0 0 3218 1996">
<circle cx="140.2" cy="98" r="12.1" fill="#fd5d52"/>
<circle cx="179.9" cy="98" r="12.1" fill="#e6bd2c"/>
<circle cx="219.9" cy="98" r="12.1" fill="#53c22e"/>
<path d="M218.5,208 L227.8,217.5 L237.1,208" fill="none" stroke="#c5c5c5" stroke-width="1.7"/>
<path d="M218.5,636 L227.8,645.5 L237.1,636" fill="none" stroke="#c5c5c5" stroke-width="1.7"/>
<path d="M218.5,1184 L227.8,1193.5 L237.1,1184" fill="none" stroke="#c5c5c5" stroke-width="1.7"/>
<path d="M218.5,1690 L227.8,1699.5 L237.1,1690" fill="none" stroke="#c5c5c5" stroke-width="1.7"/>
<path d="M261,1784.3 L266.8,1790 L277.5,1775.6" fill="none" stroke="#fff" stroke-width="3.6"/>
<path d="M1539.3,497.2 V511.4 M1533.2,500.8 L1545.4,507.8 M1533.2,507.8 L1545.4,500.8" stroke="#2cbccb" stroke-width="2.2" fill="none"/>
<path d="M1156.0,661.5 L1159.4,665.5 L1165.4,660.5 L1171.4,665.5 L1177.4,660.5 L1183.4,665.5 L1189.4,660.5 L1195.4,665.5 L1201.4,660.5 L1207.4,665.5 L1213.4,660.5" fill="none" stroke="#56bff8" stroke-width="1.9"/>
<path d="M1431.5,697.5 L1434.9,701.5 L1440.9,696.5 L1446.9,701.5 L1452.9,696.5 L1458.9,701.5 L1464.9,696.5 L1470.9,701.5 L1476.9,696.5 L1482.9,701.5 L1488.9,696.5" fill="none" stroke="#56bff8" stroke-width="1.9"/>
<g fill="none" stroke="#6e737c" stroke-width="3" stroke-linejoin="round"><path d="M151.5,178.4 V148 Q151.5,145.4 154,145.4 H170.5 L178.5,153.5 V176 Q178.5,178.4 176,178.4 Z"/><path d="M169.6,145.4 V154.4 H178.5"/><path d="M151.5,157.5 H142 Q139.6,157.5 139.6,160 V188 Q139.6,190.3 142,190.3 H164 Q166.3,190.3 166.3,188 V178.4"/></g>
<g fill="none" stroke="#6e737c" stroke-width="3" ><circle cx="166.5" cy="264.4" r="14.5"/><path d="M156.2,274.7 L139,294.6"/></g>
<g fill="none" stroke="#6e737c" stroke-width="3" ><circle cx="149.4" cy="359.4" r="5.9"/><circle cx="170.4" cy="368.2" r="5.9"/><circle cx="149.4" cy="392.5" r="5.9"/><path d="M149.4,365.3 V386.6"/><path d="M170.4,374 C170.4,380 163,378.8 158.7,379.4 S150.5,382 149.4,386.5"/></g>
<rect x="153" y="375" width="40" height="34" rx="17" fill="#21252b" opacity="0.6"/>
<rect x="154" y="376" width="38" height="32" rx="16" fill="#4479d6"/>
<text x="173" y="398.2" font-family="Liberation Sans" font-weight="bold" font-size="17.5" fill="#fff" text-anchor="middle">18</text>
<rect x="112" y="432" width="4" height="96" fill="#d7dae0"/>
<g fill="none" stroke="#d7dae0" stroke-width="3" stroke-linejoin="miter"><path d="M152.4,478 V457.8 L182,476.2 L163.2,488.6"/></g>
<g fill="none" stroke="#d7dae0" stroke-width="2.8" ><ellipse cx="148" cy="493.6" rx="7.6" ry="10.2"/><path d="M140.5,489.7 H155.5 M136,493.4 H140.5 M155.5,493.4 H160 M137.5,484.3 L141.3,488 M158.5,484.3 L154.7,488 M137.5,502.8 L141.3,499 M158.5,502.8 L154.7,499"/></g>
<g fill="none" stroke="#6e737c" stroke-width="3" stroke-linejoin="round"><path d="M137.5,570.7 H155.4 V606.4 H137.5 Z M137.5,588.5 H173.4 V606.4 H155.4"/><rect x="164.6" y="561.5" width="17.8" height="17.9" rx="1.5"/></g>
<g fill="none" stroke="#6e737c" stroke-width="2.8" ><ellipse cx="160" cy="672.5" rx="15.5" ry="6.4"/><path d="M144.5,672.5 V703 A15.5,6.8 0 0 0 175.5,703 V672.5"/></g>
<g fill="none" stroke="#6e737c" stroke-width="2.4" ><circle cx="160" cy="792" r="23.4"/><path d="M156.4,780.2 V803.4 M156.4,780.2 L168.4,792.2"/></g>
<g fill="#6e737c"><circle cx="156.4" cy="780.2" r="4.5"/><circle cx="168.4" cy="792.2" r="4.5"/><circle cx="156.4" cy="803.4" r="4.5"/></g>
<g fill="none" stroke="#6e737c" stroke-width="3" ><circle cx="160" cy="1643.8" r="22.4"/><circle cx="160" cy="1639" r="9.4"/><path d="M146.6,1660.3 A14.6,13.5 0 0 1 173.4,1660.3"/></g>
<g fill="none" stroke="#6e737c" stroke-width="3" stroke-linejoin="round"><path d="M155.26,1732.31 L156.66,1725.45 L163.34,1725.45 L164.74,1732.31 L167.61,1733.50 L173.44,1729.63 L178.17,1734.36 L174.30,1740.19 L175.49,1743.06 L182.35,1744.46 L182.35,1751.14 L175.49,1752.54 L174.30,1755.41 L178.17,1761.24 L173.44,1765.97 L167.61,1762.10 L164.74,1763.29 L163.34,1770.15 L156.66,1770.15 L155.26,1763.29 L152.39,1762.10 L146.56,1765.97 L141.83,1761.24 L145.70,1755.41 L144.51,1752.54 L137.65,1751.14 L137.65,1744.46 L144.51,1743.06 L145.70,1740.19 L141.83,1734.36 L146.56,1729.63 L152.39,1733.50 Z"/><circle cx="160" cy="1747.8" r="5.4"/></g>
<g fill="none" stroke="#5cc96f" stroke-width="3" stroke-linejoin="miter"><path d="M456.3,146.8 V165.2 L471.2,156 Z"/></g>
<g fill="none" stroke="#c8c8c8" stroke-width="2.2" ><path d="M714.5,152.3 L723.6,161.3 L732.7,152.3"/></g>
<g fill="none" stroke="#c8c8c8" stroke-width="2" stroke-linejoin="round"><path d="M783.16,145.25 L783.97,141.16 L788.03,141.16 L788.84,145.25 L790.18,145.80 L793.64,143.48 L796.52,146.36 L794.20,149.82 L794.75,151.16 L798.84,151.97 L798.84,156.03 L794.75,156.84 L794.20,158.18 L796.52,161.64 L793.64,164.52 L790.18,162.20 L788.84,162.75 L788.03,166.84 L783.97,166.84 L783.16,162.75 L781.82,162.20 L778.36,164.52 L775.48,161.64 L777.80,158.18 L777.25,156.84 L773.16,156.03 L773.16,151.97 L777.25,151.16 L777.80,149.82 L775.48,146.36 L778.36,143.48 L781.82,145.80 Z"/><circle cx="786" cy="154" r="2.9"/></g>
<g fill="none" stroke="#c8c8c8" stroke-width="2" ><path d="M843,151.3 V143 Q843,140.9 845,140.9 H861 Q863,140.9 863,143 V159 Q863,161 861,161 H852"/><path d="M850,146.3 L855.5,152 L852.3,155.8"/></g>
<g fill="none" stroke="#c8c8c8" stroke-width="1.9" ><ellipse cx="842" cy="162.3" rx="4.5" ry="6.8"/><path d="M837.5,159.6 H846.5 M834,163 H837.5 M846.5,163 H850 M834.8,156.5 L837.5,159 M849.5,156.5 L846.8,159 M834.8,169.5 L837.8,166.5 M849.5,169.5 L846.5,166.5"/></g>
<g fill="#c8c8c8"><circle cx="904" cy="154" r="2.2"/><circle cx="913.8" cy="154" r="2.2"/><circle cx="923.8" cy="154" r="2.2"/></g>
<defs><g id="py">
<path fill="#2e7cb8" d="M10,0 H16.3 Q20.3,0 20.3,4 V9 Q20.3,12.6 16.7,12.6 H9.7 Q6.1,12.6 6.1,16.2 V20.5 H4 Q0,20.5 0,16.5 V11 Q0,7.1 4,7.1 H13 V6.4 H6.1 V4 Q6.1,0 10,0 Z"/>
<circle cx="9.5" cy="3.4" r="1.3" fill="#21252b"/>
<g transform="rotate(180 13.35 13.45)">
<path fill="#fdd700" d="M10,0 H16.3 Q20.3,0 20.3,4 V9 Q20.3,12.6 16.7,12.6 H9.7 Q6.1,12.6 6.1,16.2 V20.5 H4 Q0,20.5 0,16.5 V11 Q0,7.1 4,7.1 H13 V6.4 H6.1 V4 Q6.1,0 10,0 Z"/>
<circle cx="9.5" cy="3.4" r="1.3" fill="#21252b"/>
</g></g></defs>
<use href="#py" x="988.7" y="142.6"/>
<use href="#py" x="1088.8" y="198.6"/>
<g fill="none" stroke="#d0d0d0" stroke-width="2.3" ><path d="M1233.8,148.4 L1249,163.6 M1249,148.4 L1233.8,163.6"/></g>
<g fill="none" stroke="#a8a8a8" stroke-width="2" ><path d="M1066.8,202.8 L1076.2,212.2 L1066.8,221.6 M1329.3,202.8 L1338.7,212.2 L1329.3,221.6"/></g>
<g fill="none" stroke="#c8c8c8" stroke-width="2" ><circle cx="2852.9" cy="146.6" r="4.5"/><circle cx="2871.1" cy="167.1" r="4.5"/><path d="M2852.9,151.1 V160 Q2852.9,166.9 2859.5,166.9 H2863.2 M2858.6,162.3 L2863.2,166.9 L2858.6,171.5"/><path d="M2871.1,162.6 V153 Q2871.1,146.9 2865,146.9 H2861.1 M2865.8,142.3 L2861.1,146.9 L2865.8,151.5"/></g>
<g fill="none" stroke="#60cf77" stroke-width="2.7" stroke-linejoin="miter"><path d="M2919.5,146.2 V165.6 L2934.3,155.9 Z"/></g>
<g fill="none" stroke="#c8c8c8" stroke-width="2" ><rect x="2979.6" y="143.3" width="23.1" height="23.4" rx="2.5"/><path d="M2990.9,143.4 V166.6"/></g>
<g fill="#c8c8c8"><circle cx="3043.9" cy="155.9" r="2.1"/><circle cx="3053.9" cy="155.9" r="2.1"/><circle cx="3063.9" cy="155.9" r="2.1"/></g>
<g fill="none" stroke="#cccccc" stroke-width="2" ><path d="M2715.5,1134.2 L2724,1142.5 L2732.5,1134.2"/></g>
<g fill="none" stroke="#cccccc" stroke-width="2" ><path d="M2784,1134.8 H2810 M2797,1121.7 V1147.9"/></g>
<g fill="none" stroke="#cccccc" stroke-width="2" ><rect x="2851" y="1123" width="24" height="24.5" rx="2.5"/><path d="M2862.9,1123 V1147.5"/></g>
<g fill="none" stroke="#cccccc" stroke-width="1.8" ><path d="M2914,1126.6 H2936 M2920.8,1126.4 V1123.5 H2929.2 V1126.4 M2916.8,1127 V1145.2 Q2916.8,1147.8 2919.4,1147.8 H2931 Q2933.4,1147.8 2933.4,1145.2 V1127 M2921.3,1131 V1143 M2925.1,1131 V1143 M2928.9,1131 V1143"/></g>
<g fill="none" stroke="#cccccc" stroke-width="2" ><path d="M2980.5,1140 L2990,1130.6 L2999.5,1140"/></g>
<g fill="none" stroke="#cccccc" stroke-width="2" ><path d="M3045.6,1127.8 L3062.6,1144.6 M3062.6,1127.8 L3045.6,1144.6"/></g>
<g fill="none" stroke="#a3adbf" stroke-width="1.9" ><circle cx="149.7" cy="1816.2" r="3.6"/><circle cx="149.7" cy="1835.8" r="3.6"/><circle cx="162.2" cy="1821.4" r="3.6"/><path d="M149.7,1819.8 V1832.2 M162.2,1825 Q162.2,1829.3 156,1829.3 Q149.7,1829.5 149.7,1832"/></g>
<g fill="none" stroke="#a3adbf" stroke-width="1.9" ><path d="M302.6,1825 A9.5,9.5 0 0 1 320.6,1822.5 M322.3,1819 L321,1824 L316.3,1822.3 M321,1827 A9.5,9.5 0 0 1 303,1829.5 M301.3,1833 L302.6,1828 L307.3,1829.7"/></g>
<g fill="none" stroke="#a3adbf" stroke-width="1.9" ><circle cx="752" cy="1826" r="10.9"/><path d="M747.5,1821.5 L756.5,1830.5 M756.5,1821.5 L747.5,1830.5"/></g>
<g fill="none" stroke="#a3adbf" stroke-width="1.9" stroke-linejoin="round"><path d="M808.8,1813.6 L820.2,1835.6 H797.4 Z M808.8,1822 V1829"/></g>
<circle cx="808.8" cy="1832" r="1.3" fill="#a3adbf"/>
<g fill="none" stroke="#a3adbf" stroke-width="1.9" ><circle cx="865.5" cy="1826" r="10.9"/><path d="M865.5,1823.5 V1832"/></g>
<circle cx="865.5" cy="1820" r="1.3" fill="#a3adbf"/>
<g fill="none" stroke="#a3adbf" stroke-width="1.9" ><ellipse cx="947" cy="1818" rx="7.6" ry="3.4"/><path d="M939.4,1818 V1833.5 A7.6,3.6 0 0 0 954.6,1833.5 V1818"/></g>
<g fill="none" stroke="#a3adbf" stroke-width="1.9" ><path d="M1099,1827 L1105.5,1834.2 L1119.8,1818.2 M1233.8,1827 L1240.3,1834.2 L1254.5,1818.2"/></g>
<g fill="none" stroke="#a3adbf" stroke-width="1.5" ><circle cx="2998" cy="1824.7" r="5"/><path d="M2990.6,1838 A7.5,7.5 0 0 1 3005.6,1838"/><path d="M2996.7,1817.8 V1814.6 H3013.2 V1825.6 H3011 L3006.6,1829.8 V1825.6 H3005"/></g>
<g fill="none" stroke="#a3adbf" stroke-width="1.5" stroke-linejoin="round"><path d="M3052.5,1834.2 Q3054.6,1831 3054.6,1823 A7.3,8.2 0 0 1 3069.2,1823 Q3069.2,1831 3071.3,1834.2 Z M3058.6,1835.2 A3.3,3.3 0 0 0 3065.2,1835.2"/></g>
</svg>
</body></html>
